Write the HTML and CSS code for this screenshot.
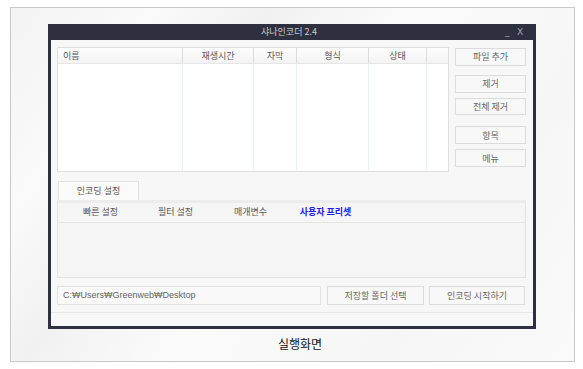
FILE: index.html
```html
<!DOCTYPE html>
<html>
	<head>
		<meta charset="utf-8">
		<title>샤나인코더 2.4</title>
		<link rel="stylesheet" href="styles.css">
	</head>
	<body>
		<div class="frame">
			<div class="window">
				<div class="titlebar">
					<span class="title">샤나인코더 2.4</span>
					<span class="ctrl">_</span>
					<span class="ctrl close">X</span>
				</div>
				<div class="inner">
					<div class="top">
						<div class="list">
							<div class="row head">
								<div class="col c1">이름</div>
								<div class="col c2">재생시간</div>
								<div class="col c3">자막</div>
								<div class="col c4">형식</div>
								<div class="col c5">상태</div>
								<div class="col c6"></div>
							</div>
							<div class="row body">
								<div class="col c1"></div>
								<div class="col c2"></div>
								<div class="col c3"></div>
								<div class="col c4"></div>
								<div class="col c5"></div>
								<div class="col c6"></div>
							</div>
						</div>
						<div class="side">
							<button type="button" class="btn">파일 추가</button>
							<button type="button" class="btn sp1">제거</button>
							<button type="button" class="btn">전체 제거</button>
							<button type="button" class="btn sp2">항목</button>
							<button type="button" class="btn">메뉴</button>
						</div>
					</div>
					<div class="tabs">
						<div class="tab">인코딩 설정</div>
					</div>
					<div class="panel">
						<ul class="subtabs">
							<li>빠른 설정</li>
							<li>필터 설정</li>
							<li>매개변수</li>
							<li class="on">사용자 프리셋</li>
						</ul>
					</div>
					<div class="pathrow">
						<div class="path">C:₩Users₩Greenweb₩Desktop</div>
						<button type="button" class="btn folder">저장할 폴더 선택</button>
						<button type="button" class="btn start">인코딩 시작하기</button>
					</div>
					<div class="foot"></div>
				</div>
			</div>
			<p class="caption">실행화면</p>
		</div>
	</body>
</html>
```

FILE: styles.css
```css
*{
	margin: 0px;
	padding: 0px;
	box-sizing: border-box;
}
ul{
	list-style: none;
}
body{
	font-family: "Noto Sans CJK KR", "Liberation Sans", sans-serif;
	font-size: 9px;
	color: #555;
	background: #fff;
}
.frame{
	margin: 7px 0 0 10px;
	width: 565px;
	height: 355px;
	border: 1px solid #c9c9c9;
	padding: 16px 0 0 37px;
	background: linear-gradient(125deg, #f3f3f3 0%, #fafafa 18%, #f1f1f1 32%, #fbfbfb 50%, #f6f6f6 75%, #fafafa 100%);
}
.window{
	width: 488px;
	height: 305px;
	background: #2e3040;
	padding: 0 3px 3px 3px;
	display: flex;
	flex-direction: column;
}
.titlebar{
	height: 16px;
	display: flex;
	align-items: center;
	color: #c9cad2;
	padding-bottom: 1px;
}
.title{
	flex: 1;
	text-align: center;
	padding-left: 22px;
	font-size: 9px;
}
.ctrl{
	width: 12px;
	font-family: "DejaVu Sans", sans-serif;
	font-size: 9px;
	color: #9fa3b5;
}
.close{
	margin-right: 4px;
}
.inner{
	flex: 1;
	background: #f7f7f7;
	padding: 7px 7px 0 6px;
	display: flex;
	flex-direction: column;
}
.top{
	display: flex;
	gap: 6px;
	height: 125px;
}
.list{
	width: 392px;
	border: 1px solid #dedede;
	background: #fff;
	display: flex;
	flex-direction: column;
}
.row{
	display: flex;
}
.head{
	height: 16px;
	background: linear-gradient(#fdfdfd, #f3f3f3);
	border-bottom: 1px solid #e6e6e6;
}
.head .col{
	border-right: 1px solid #dcdcdc;
	text-align: center;
	line-height: 15px;
}
.head .c1{
	text-align: left;
	padding-left: 5px;
}
.body{
	flex: 1;
}
.body .col{
	border-right: 1px solid #edf2f8;
}
.col.c1{ width: 125px; }
.col.c2{ width: 71px; }
.col.c3{ width: 43px; }
.col.c4{ width: 72px; }
.col.c5{ width: 58px; }
.col.c6{ flex: 1; border-right: 0; }
.side{
	width: 71px;
	display: flex;
	flex-direction: column;
	padding-top: 1px;
}
.btn{
	font-family: "Noto Sans CJK KR", "Liberation Sans", sans-serif;
	font-size: 9px;
	color: #666;
	background: #f8f8f8;
	border: 1px solid #dcdcdc;
	height: 19px;
}
.side .btn{
	margin-bottom: 5px;
}
.side .sp1{
	margin-top: 4px;
}
.side .sp2{
	margin-top: 6px;
}
.tabs{
	margin-top: 9px;
	padding-left: 1px;
	display: flex;
}
.tab{
	width: 81px;
	height: 19px;
	background: #fbfbfb;
	border: 1px solid #e2e2e2;
	border-bottom: 0;
	text-align: center;
	line-height: 18px;
}
.panel{
	height: 78px;
	border: 1px solid #e2e2e2;
	border-top: 3px solid #ececec;
	background: #f5f5f5;
}
.subtabs{
	display: flex;
	height: 20px;
	padding-left: 5px;
	border-bottom: 1px solid #e4e4e4;
}
.subtabs li{
	width: 75px;
	text-align: center;
	line-height: 18px;
}
.subtabs .on{
	color: #1c1cf0;
	font-weight: bold;
}
.pathrow{
	margin-top: 8px;
	display: flex;
	height: 19px;
}
.path{
	width: 264px;
	border: 1px solid #e2e2e2;
	background: #f9f9f9;
	font-family: "Liberation Sans", sans-serif;
	font-size: 9px;
	color: #666;
	line-height: 17px;
	padding-left: 5px;
}
.folder{
	width: 97px;
	margin-left: 6px;
}
.start{
	width: 96px;
	margin-left: 5px;
}
.foot{
	margin-top: 7px;
	margin-left: -6px;
	margin-right: -7px;
	border-top: 1px solid #e6e6e6;
}
.caption{
	margin-top: 6px;
	margin-left: -37px;
	text-align: center;
	font-size: 12px;
	color: #111;
	padding-left: 15px;
}
```
